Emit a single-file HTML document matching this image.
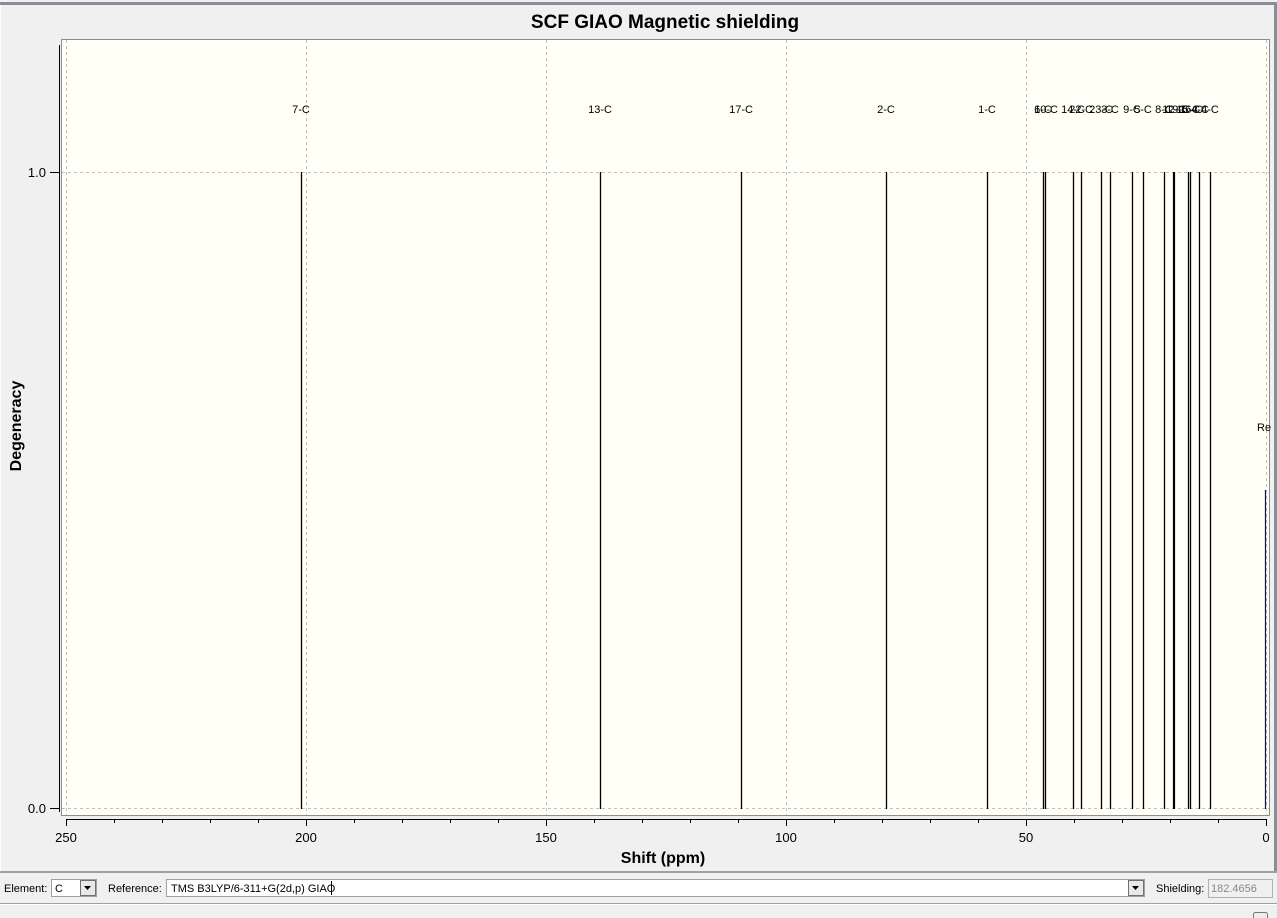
<!DOCTYPE html>
<html><head><style>
html,body{margin:0;padding:0;width:1277px;height:918px;overflow:hidden;background:#f0f0f0;font-family:"Liberation Sans",Arial,sans-serif}
</style></head><body>
<svg width="1277" height="918" xmlns="http://www.w3.org/2000/svg" style="position:absolute;left:0;top:0">
<rect x="0" y="0" width="1277" height="918" fill="#f0f0f0"/>
<rect x="0" y="2" width="1277" height="3" fill="#8a8e94"/>
<rect x="1274" y="2" width="3" height="870" fill="#8a8e94"/>
<rect x="0" y="5" width="1" height="866" fill="#fff"/>
<text x="665" y="28" font-size="19" font-weight="bold" text-anchor="middle" fill="#000">SCF GIAO Magnetic shielding</text>
<rect x="61.5" y="39.5" width="1208" height="776" fill="#fffff6" stroke="#8a8e94" stroke-width="1"/>
<g stroke="#c0c0c0" stroke-dasharray="3,3" stroke-width="1">
<line x1="66.5" y1="40" x2="66.5" y2="815"/><line x1="306.5" y1="40" x2="306.5" y2="815"/>
<line x1="546.5" y1="40" x2="546.5" y2="815"/><line x1="786.5" y1="40" x2="786.5" y2="815"/>
<line x1="1026.5" y1="40" x2="1026.5" y2="815"/><line x1="1266.5" y1="40" x2="1266.5" y2="815"/>
<line x1="62" y1="172.5" x2="1269" y2="172.5"/><line x1="62" y1="808.5" x2="1269" y2="808.5"/>
</g>
<g stroke="#000" stroke-width="1.3">
<line x1="301.5" y1="172" x2="301.5" y2="809"/>
<line x1="600.5" y1="172" x2="600.5" y2="809"/>
<line x1="741.5" y1="172" x2="741.5" y2="809"/>
<line x1="886.5" y1="172" x2="886.5" y2="809"/>
<line x1="987.5" y1="172" x2="987.5" y2="809"/>
<line x1="1043.5" y1="172" x2="1043.5" y2="809"/>
<line x1="1045.5" y1="172" x2="1045.5" y2="809"/>
<line x1="1073.5" y1="172" x2="1073.5" y2="809"/>
<line x1="1081.5" y1="172" x2="1081.5" y2="809"/>
<line x1="1101.5" y1="172" x2="1101.5" y2="809"/>
<line x1="1110.5" y1="172" x2="1110.5" y2="809"/>
<line x1="1132.5" y1="172" x2="1132.5" y2="809"/>
<line x1="1143.5" y1="172" x2="1143.5" y2="809"/>
<line x1="1164.5" y1="172" x2="1164.5" y2="809"/>
<line x1="1174" y1="172" x2="1174" y2="809" stroke-width="2.2"/>
<line x1="1188.5" y1="172" x2="1188.5" y2="809"/>
<line x1="1190.5" y1="172" x2="1190.5" y2="809"/>
<line x1="1199.5" y1="172" x2="1199.5" y2="809"/>
<line x1="1210.5" y1="172" x2="1210.5" y2="809"/>
</g>
<line x1="1265.5" y1="490" x2="1265.5" y2="809" stroke="#0000cc" stroke-width="1.2"/>
<g font-size="11" fill="#000" text-anchor="middle">
<text x="301" y="113">7-C</text><text x="600" y="113">13-C</text><text x="741" y="113">17-C</text>
<text x="886" y="113">2-C</text><text x="987" y="113">1-C</text>
<text x="1043" y="113">6-C</text><text x="1046" y="113">10-C</text>
<text x="1073" y="113">14-C</text><text x="1081" y="113">22-C</text>
<text x="1101" y="113">23-C</text><text x="1110" y="113">3-C</text>
<text x="1132" y="113">9-C</text><text x="1143" y="113">5-C</text>
<text x="1164" y="113">8-C</text><text x="1174" y="113">12-C</text><text x="1178" y="113">19-C</text>
<text x="1188" y="113">15-C</text><text x="1191" y="113">16-C</text>
<text x="1200" y="113">4-C</text><text x="1210" y="113">4-C</text>
<text x="1257" y="431" text-anchor="start">Re</text>
</g>
<g stroke="#000" stroke-width="1">
<line x1="59.5" y1="45" x2="59.5" y2="812"/>
<line x1="50" y1="172.5" x2="59" y2="172.5"/><line x1="50" y1="808.5" x2="59" y2="808.5"/>
<line x1="66" y1="819.5" x2="1267" y2="819.5"/>
<path d="M66.5 819v7M114.5 819v4M162.5 819v4M210.5 819v4M258.5 819v4M306.5 819v7M354.5 819v4M402.5 819v4M450.5 819v4M498.5 819v4M546.5 819v7M594.5 819v4M642.5 819v4M690.5 819v4M738.5 819v4M786.5 819v7M834.5 819v4M882.5 819v4M930.5 819v4M978.5 819v4M1026.5 819v7M1074.5 819v4M1122.5 819v4M1170.5 819v4M1218.5 819v4M1266.5 819v7"/>
</g>
<g font-size="13" fill="#000">
<text x="46" y="177" text-anchor="end">1.0</text><text x="46" y="813" text-anchor="end">0.0</text>
<g text-anchor="middle">
<text x="66" y="842">250</text><text x="306" y="842">200</text><text x="546" y="842">150</text>
<text x="786" y="842">100</text><text x="1026" y="842">50</text><text x="1266" y="842">0</text></g>
</g>
<text x="663" y="863" font-size="16" font-weight="bold" text-anchor="middle">Shift (ppm)</text>
<text transform="translate(21,426) rotate(-90)" font-size="16" font-weight="bold" text-anchor="middle">Degeneracy</text>
<rect x="0" y="871" width="1277" height="2" fill="#a0a0a0"/>
<rect x="0" y="903" width="1277" height="1" fill="#a0a0a0"/>
<rect x="0" y="904" width="1277" height="1" fill="#fff"/>
<g font-size="11" fill="#000">
<text x="4" y="892">Element:</text>
<rect x="51.5" y="879.5" width="45" height="17" fill="#fff" stroke="#a0a0a0"/>
<text x="55" y="892">C</text>
<rect x="80.5" y="880.5" width="15" height="15" fill="#e8e8e8" stroke="#707070"/>
<path d="M84 886h7l-3.5 4z" fill="#000"/>
<text x="108" y="892">Reference:</text>
<rect x="166.5" y="879.5" width="978" height="17" fill="#fff" stroke="#a0a0a0"/>
<text x="171" y="892">TMS B3LYP/6-311+G(2d,p) GIAO</text>
<line x1="331.5" y1="881" x2="331.5" y2="895" stroke="#000"/>
<rect x="1128.5" y="880.5" width="15" height="15" fill="#e8e8e8" stroke="#707070"/>
<path d="M1132 886h7l-3.5 4z" fill="#000"/>
<text x="1156" y="892">Shielding:</text>
<rect x="1208.5" y="879.5" width="64" height="18" fill="#f0f0f0" stroke="#b0b0b0"/>
<text x="1211" y="892" fill="#888">182.4656</text>
</g>
<rect x="1253.5" y="912.5" width="14" height="8" rx="2" fill="#eee" stroke="#777"/>
</svg>
</body></html>
